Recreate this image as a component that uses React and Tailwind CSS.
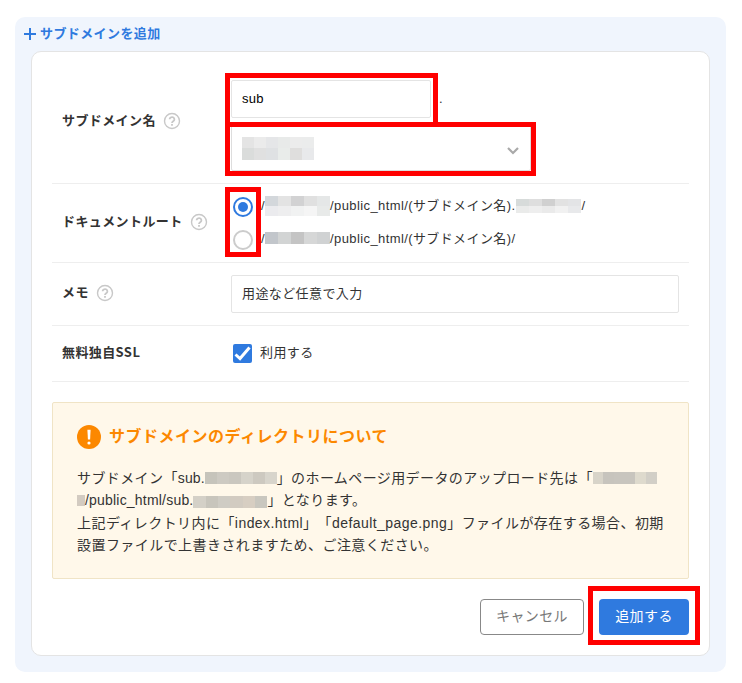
import React from "react";

// Pixelated block that hides private values
const Mosaic = ({ rows, className = "" }) => (
  <span className={`inline-flex flex-col overflow-hidden shrink-0 ${className}`}>
    {rows.map((cells, i) => (
      <span key={i} className="flex flex-1">
        {cells.map((color, j) => (
          <span key={j} className="flex-1" style={{ backgroundColor: color }} />
        ))}
      </span>
    ))}
  </span>
);

// Red annotation frame, always placed over its parent
const Frame = ({ className }) => (
  <span
    className={`absolute border-[5px] border-[#ff0000] pointer-events-none ${className}`}
  />
);

const HelpIcon = () => (
  <svg
    width="20"
    height="20"
    viewBox="0 0 20 20"
    fill="none"
    stroke="#c8c8c8"
    className="shrink-0"
  >
    <circle cx="10" cy="10" r="7.5" strokeWidth="1.4" />
    <path
      d="M7.6 8.3a2.4 2.2 0 1 1 3.9 1.7c-.9.7-1.5 1-1.5 2.1"
      strokeWidth="1.8"
    />
    <path d="M10 13.1v1.7" strokeWidth="1.8" />
  </svg>
);

const Row = ({ label, help = true, className = "", labelClass = "", children }) => (
  <div className={`flex border-b border-[#eeeeee] ${className}`}>
    <div
      className={`w-[179px] shrink-0 pl-[10px] flex items-center gap-[6px] font-bold ${labelClass}`}
    >
      <span>{label}</span>
      {help && <HelpIcon />}
    </div>
    <div className="flex-1 min-w-0">{children}</div>
  </div>
);

const Radio = ({ checked }) => (
  <span
    className={`w-5 h-5 shrink-0 rounded-full border-2 bg-white flex items-center justify-center ${
      checked ? "border-[#2f7adf]" : "border-[#cccccc]"
    }`}
  >
    {checked && <span className="w-[10px] h-[10px] rounded-full bg-[#2f7adf]" />}
  </span>
);

const App = () => {
  return (
    <div className="h-[683px] bg-white pt-[17px] pl-[15px] font-['Liberation_Sans','Noto_Sans_CJK_JP',sans-serif] text-[13px] leading-5 tracking-[0.4px] text-[#333333] [text-spacing-trim:space-all]">
      <div className="w-[711px] h-[655px] rounded-[10px] bg-[#f0f5fd] px-4 pb-4 flex flex-col">
        <h1 className="h-[34px] -ml-[7px] pb-px flex items-center gap-[4px] font-bold text-[#2f7adf]">
          <svg width="12" height="12" viewBox="0 0 12 12" fill="currentColor">
            <path d="M5 0h2v5h5v2H7v5H5V7H0V5h5z" />
          </svg>
          <span>サブドメインを追加</span>
        </h1>

        <div className="w-[679px] flex-1 rounded-[10px] border border-[#e4e4e4] bg-white px-5">
          <Row label="サブドメイン名" className="h-[132px] pt-7 pb-3" labelClass="pb-[9px]">
            <div className="relative flex flex-col gap-[7px]">
              <div className="flex items-center">
                <div className="w-[200px] h-[38px] px-[10px] flex items-center rounded-xs border border-[#e4e4e4] tracking-[0.2px] text-black">
                  sub
                </div>
                <span className="ml-[8px]">.</span>
              </div>
              <div className="w-[300px] h-[46px] pl-[10px] pr-[11px] flex items-center justify-between rounded-xs border border-[#dddddd]">
                <Mosaic
                  className="w-[72px] h-[23px]"
                  rows={[
                    ["#e4e4e4", "#ebebeb", "#e5e6e8", "#e8eae9", "#ececec", "#ebecec"],
                    ["#dadcdb", "#e0e0e0", "#dfe1e3", "#e9ecea", "#dfdedd", "#e8e9eb"],
                  ]}
                />
                <svg width="12" height="8" viewBox="0 0 12 8" fill="none" className="mt-[5px]">
                  <path d="M1 1l5 5l5-5" stroke="#a9a9a9" strokeWidth="2.2" />
                </svg>
              </div>
              <Frame className="-left-[6px] -top-[7px] w-[213px] h-[54px]" />
              <Frame className="-left-[6px] top-[42px] w-[311px] h-[54px]" />
            </div>
          </Row>

          <Row label="ドキュメントルート" className="h-[79px]" labelClass="pb-[2px]">
            <div className="relative pt-[13px] pl-[2px] flex flex-col gap-[13px]">
              <div className="h-5 flex items-center">
                <Radio checked />
                <span className="ml-[8px] mb-[2px] flex items-center">
                  <span className="w-[4px]">/</span>
                  <Mosaic
                    className="w-[65px] h-5"
                    rows={[
                      ["#d3d7db", "#e3e3e3", "#d2d2d3", "#e0e0e0", "#e5e7e7"],
                      ["#ebebee", "#eeeeef", "#f1f2f2", "#f5f5f5", "#e8eae9"],
                    ]}
                  />
                  <span>/public_html/(サブドメイン名).</span>
                  <Mosaic
                    className="ml-px w-[65px] h-[14px]"
                    rows={[
                      ["#d7dbda", "#dedede", "#d0d0d0", "#e2e2e2", "#e3e4e6"],
                      ["#eaebea", "#eeeeee", "#eaeaea", "#f1f1f1", "#e8e9eb"],
                    ]}
                  />
                  <span>/</span>
                </span>
              </div>
              <div className="h-5 flex items-center">
                <Radio />
                <span className="ml-[8px] mb-[2px] flex items-center">
                  <span className="w-[4px]">/</span>
                  <Mosaic
                    className="w-[65px] h-3 mb-[2px]"
                    rows={[["#c2c6cb", "#d2d4d4", "#c4c4c4", "#d6d7d7", "#d0d2d3"]]}
                  />
                  <span>/public_html/(サブドメイン名)/</span>
                </span>
              </div>
              <Frame className="-left-[6px] top-[3px] w-[36px] h-[70px]" />
            </div>
          </Row>

          <Row label="メモ" className="h-[63px]" labelClass="pb-[2px]">
            <div className="mt-3 w-[448px] h-[38px] px-[10px] flex items-center rounded-xs border border-[#e4e4e4]">
              用途など任意で入力
            </div>
          </Row>

          <Row
            label={<span className="font-['Noto_Sans_CJK_JP',sans-serif]">無料独自SSL</span>}
            help={false}
            className="h-[56px]"
            labelClass="pb-[2px]"
          >
            <div className="h-[55px] pl-[2px] flex items-center gap-[8px]">
              <span className="w-[19px] h-[19px] rounded-xs bg-[#2f7adf]">
                <svg width="19" height="19" viewBox="0 0 19 19" fill="none">
                  <path d="M2.5 10.5L7 14.5L16.5 3.5" stroke="#fff" strokeWidth="3" />
                </svg>
              </span>
              <span className="-mt-[2px]">利用する</span>
            </div>
          </Row>

          <section className="mt-5 h-[177px] rounded-xs border border-[#f0e4c6] bg-[#fff8ea] px-6 pt-[22px]">
            <h2 className="flex items-center gap-[8px] text-[16px] leading-6 tracking-[0.5px] font-bold text-[#fc8800] whitespace-nowrap">
              <svg width="24" height="24" viewBox="0 0 24 24">
                <circle cx="12" cy="12" r="12" fill="#fc8800" />
                <path d="M10.4 4.8h3.2l-.5 9.7h-2.2z" fill="#fff" />
                <circle cx="12" cy="18" r="1.6" fill="#fff" />
              </svg>
              <span>サブドメインのディレクトリについて</span>
            </h2>
            <div className="mt-[18px] text-[14px] leading-[22.4px] whitespace-nowrap">
              <div className="flex items-center h-[22.4px]">
                <span>
                  サブドメイン「<span className="tracking-[0.1px]">sub.</span>
                </span>
                <Mosaic
                  className="w-[72px] h-3"
                  rows={[["#c6c4bb", "#cdcac2", "#cac7bf", "#d6d3ca", "#cdc9c0", "#d8d5cc"]]}
                />
                <span>」のホームページ用データのアップロード先は「</span>
                <Mosaic
                  className="w-[64px] h-3"
                  rows={[["#d8d4c9", "#c7c4bd", "#c8c5be", "#c8c5be", "#dedacd", "#d2cfc7"]]}
                />
              </div>
              <div className="flex items-center h-[22.4px]">
                <Mosaic className="w-[8px] h-[11px]" rows={[["#d3cbc1"]]} />
                <span className="tracking-[0.2px]">/public_html/sub.</span>
                <Mosaic
                  className="w-[74px] h-3 mt-[2px]"
                  rows={[["#d4d0c7", "#c8c5bc", "#cfccc4", "#d2cbc1", "#d7cec2", "#c9c7bf"]]}
                />
                <span>」となります。</span>
              </div>
              <p className="tracking-[0.44px]">
                上記ディレクトリ内に「index.html」「default_page.png」ファイルが存在する場合、初期
                <br />
                設置ファイルで上書きされますため、ご注意ください。
              </p>
            </div>
          </section>

          <div className="mt-5 flex justify-end gap-[15px] text-[14px]">
            <button className="w-[104px] h-9 rounded-[4px] border border-[#888888] text-[#777777] pb-[2px]">
              キャンセル
            </button>
            <div className="relative">
              <button className="w-[90px] h-9 rounded-[4px] bg-[#2f7adf] text-white pb-[2px]">
                追加する
              </button>
              <Frame className="-left-[11px] -top-[13px] w-[112px] h-[59px]" />
            </div>
          </div>
        </div>
      </div>
    </div>
  );
};

export default App;
